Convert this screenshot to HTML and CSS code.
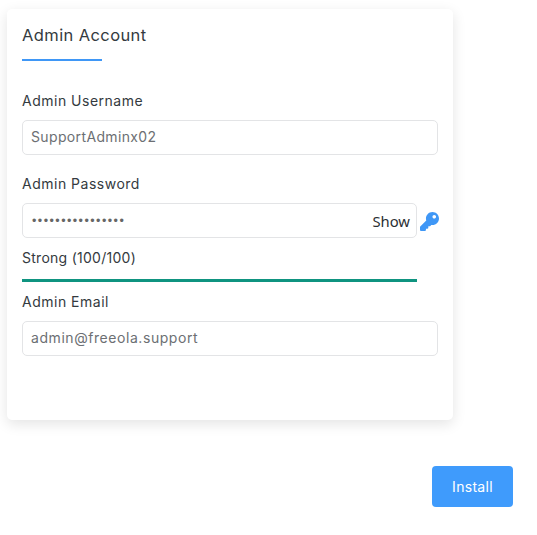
FILE: index.html
```html
<!DOCTYPE html>
<html lang="en">
<head>
<meta charset="utf-8">
<title>Admin Account</title>
<link rel="stylesheet" href="styles.css">
</head>
<body>
<main class="page">
  <section class="card">
    <h2 class="title">Admin Account</h2>
    <div class="rule"></div>
    <div class="field field-first">
      <label class="label">Admin Username</label>
      <div class="input">SupportAdminx02</div>
    </div>
    <div class="field field-pass">
      <label class="label">Admin Password</label>
      <div class="pass-row">
        <div class="input input-pass">
          <span class="dots">••••••••••••••••</span>
          <span class="show">Show</span>
        </div>
        <svg class="key" viewBox="0 0 512 512" aria-hidden="true"><path d="M512 176.001C512 273.203 433.202 352 336 352c-11.22 0-22.19-1.062-32.827-3.069l-24.012 27.014A23.999 23.999 0 0 1 261.223 384H224v40c0 13.255-10.745 24-24 24h-40v40c0 13.255-10.745 24-24 24H24c-13.255 0-24-10.745-24-24v-78.059c0-6.365 2.529-12.47 7.029-16.971l161.802-161.802C163.108 213.814 160 195.271 160 176 160 78.798 238.797.001 335.999 0 433.488-.001 512 78.511 512 176.001zM336 128c0 26.51 21.49 48 48 48s48-21.49 48-48-21.49-48-48-48-48 21.49-48 48z"/></svg>
      </div>
      <div class="strength">Strong (100/100)</div>
      <div class="meter"></div>
    </div>
    <div class="field field-email">
      <label class="label">Admin Email</label>
      <div class="input input-email">admin@freeola.support</div>
    </div>
  </section>
  <div class="actions"><button class="install">Install</button></div>
</main>
</body>
</html>
```
FILE: styles.css
```css
* { box-sizing: border-box; }
html, body { margin: 0; background: #fff; }
body { font-family: "Inter", "Open Sans", sans-serif; color: #343a40; overflow: hidden; }
.page { width: 537px; height: 535px; padding: 9px 24px 0 7px; }
.card {
  width: 446px; height: 411px; background: #fff; border-radius: 5px;
  padding: 15px 15px 0;
  box-shadow: 0 4px 14px rgba(0,0,0,.11);
}
.title { margin: 0; font-size: 16.5px; line-height: 22px; font-weight: 400; letter-spacing: .4px; color: #343a40; }
.rule { width: 80px; height: 2px; background: #3f97f6; margin-top: 13px; }
.field { display: flex; flex-direction: column; }
.field-first { margin-top: 30px; }
.field-pass { margin-top: 19px; }
.field-email { margin-top: 10px; }
.label { font-size: 14px; line-height: 20px; margin-bottom: 9px; letter-spacing: .5px; color: #343a40; }
.input {
  height: 35px; width: 416px; border: 1px solid #e3e4e6; border-radius: 5px;
  padding: 0 8px 2px 8px; display: flex; align-items: center;
  font-size: 14px; letter-spacing: .36px; color: #6c6f73;
}
.input-email { letter-spacing: .56px; }
.pass-row { display: flex; align-items: center; }
.input-pass { width: 395px; flex: none; justify-content: space-between; padding: 0 6px 0 9px; }
.dots { font-size: 12.5px; letter-spacing: 1.45px; white-space: nowrap; font-family: "Liberation Sans", sans-serif; color: #666; }
.show { font-family: "Noto Sans", sans-serif; font-size: 14.8px; letter-spacing: 0; color: #2b2f33; }
.key { width: 19px; height: 19px; flex: none; margin-left: 3px; margin-top: 2px; fill: #3f97f6; }
.strength { font-size: 14px; line-height: 20px; margin-top: 10px; letter-spacing: .27px; color: #343a40; }
.meter { width: 395px; height: 3px; background: #0f9480; margin-top: 11px; }
.actions { display: flex; justify-content: flex-end; margin-top: 46px; }
.install {
  width: 81px; height: 41px; border: 0; border-radius: 4px; background: #3f9bfc;
  color: #fff; font: 400 14px "Inter", sans-serif; letter-spacing: .3px;
}
```
